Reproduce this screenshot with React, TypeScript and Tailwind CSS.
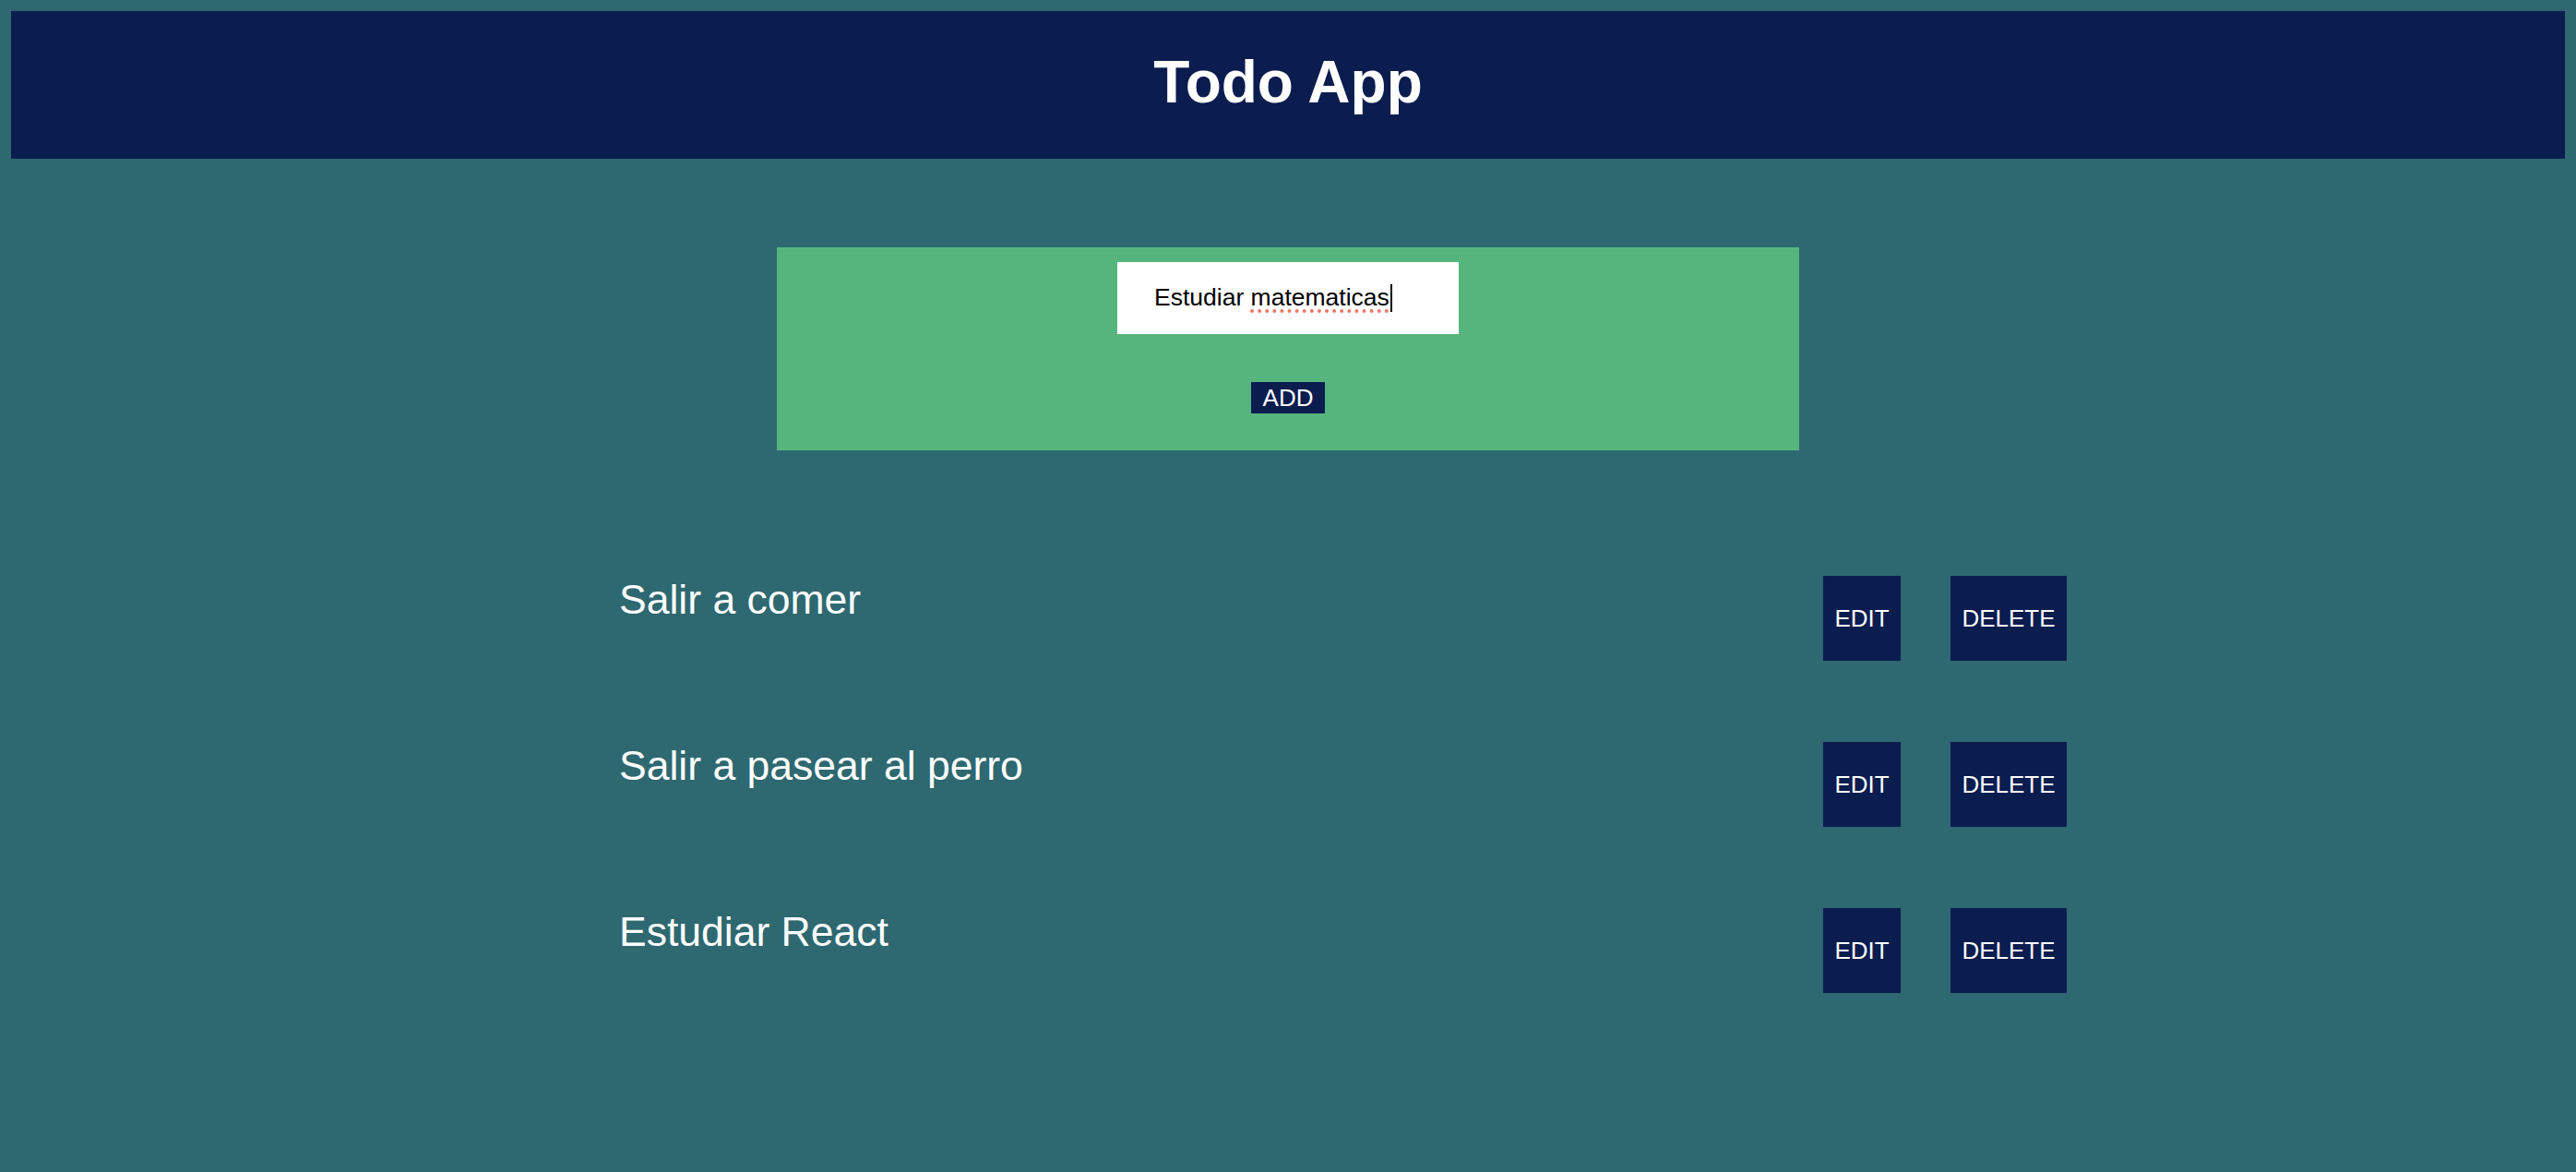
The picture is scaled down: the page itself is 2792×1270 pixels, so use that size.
import React from "react";

const todos = ["Salir a comer", "Salir a pasear al perro", "Estudiar React"];

export default function App() {
  return (
    <div className="min-h-screen bg-[#2e6870] p-3 font-['Liberation_Sans',Arial,sans-serif]">
      <header className="h-[160px] bg-[#0b1c4f] pt-[41px] text-center">
        <h1 className="text-[64px] font-bold leading-[1.15] text-white">Todo App</h1>
      </header>

      <div className="mx-auto mt-[96px] flex h-[220px] w-[1108px] flex-col items-center bg-[#56b57d] pt-4">
        <div className="flex h-[78px] w-[370px] items-center bg-white pl-10 text-[26.5px] text-black">
          <span className="whitespace-pre">
            Estudiar{" "}
            <span className="underline decoration-[#f0766a] decoration-dotted decoration-[4px] underline-offset-[4px]">
              matematicas
            </span>
          </span>
          <span className="ml-px inline-block h-[30px] w-[2px] bg-black" />
        </div>
        <button className="mt-[52px] h-[34px] w-[80px] bg-[#0b1c4f] text-[26px] leading-none text-white">
          ADD
        </button>
      </div>

      <ul className="mx-auto mt-[136px] w-[1450px]">
        {todos.map((t) => (
          <li key={t} className="mb-[88px] flex h-[92px] items-start">
            <span className="w-[1305px] shrink-0 text-[44.5px] leading-[51px] text-white">{t}</span>
            <button className="flex h-[92px] w-[84px] shrink-0 items-center justify-center bg-[#0b1c4f] text-[26px] text-white">
              EDIT
            </button>
            <button className="ml-[54px] flex h-[92px] w-[126px] shrink-0 items-center justify-center bg-[#0b1c4f] text-[26px] text-white">
              DELETE
            </button>
          </li>
        ))}
      </ul>
    </div>
  );
}
